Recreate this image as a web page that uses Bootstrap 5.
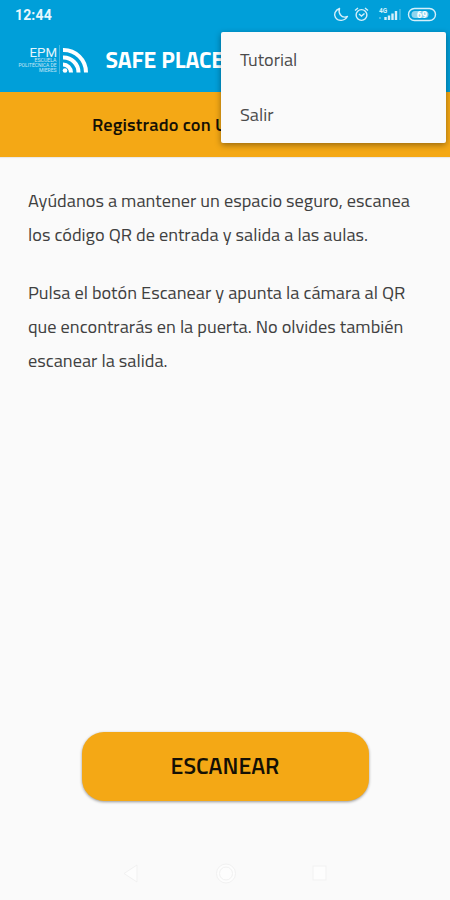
<!DOCTYPE html>
<html lang="es">
<head>
<meta charset="utf-8">
<meta name="viewport" content="width=device-width, initial-scale=1">
<title>Safe Place</title>
<link href="https://cdn.jsdelivr.net/npm/bootstrap@5.3.0/dist/css/bootstrap.min.css" rel="stylesheet">
<style>
body{background:#fafafa;font-family:"Titillium Web",Roboto,"Noto Sans",sans-serif;color:#3c3c3c;height:900px;overflow:hidden}
.top-blue{background:#009fd9;height:92px;color:#fff}
.status{height:30px;padding:0 13px 0 15px}
.clock{font-family:Roboto,sans-serif;font-size:14px;font-weight:700;line-height:30px;letter-spacing:.15px;color:#e9f7fd}
.brand{height:62px;padding:0 0 2px 17px}
.app-name{font-size:23px;font-weight:700;line-height:30px;letter-spacing:-.1px;margin-left:16.5px;white-space:nowrap}
.user-bar{background:#f4a815;height:65px;padding-left:92px;color:#141005;font-size:18.3px;font-weight:600;letter-spacing:.15px;box-shadow:0 1px 1px #0001}
.overflow-menu{top:32px;left:221px;width:225px;height:111px;border:0;border-radius:2px;background:#fafafa;box-shadow:0 2px 6px rgba(0,0,0,.38);padding:0}
.overflow-menu .dropdown-item{height:55px;padding:0 19px;font-size:18.2px;line-height:55px;color:#4b4b4b}
.intro{padding:26px 28px 0;font-size:18.3px;line-height:34px;color:#404040}
.intro p{margin:0 0 24px}
.intro span{display:block;white-space:nowrap}
.scan{width:287px;height:69px;border-radius:22px;background:#f4a815;color:#141005;font-size:23.2px;font-weight:600;line-height:1;padding:5px 0 7px;box-shadow:0 1px 3px rgba(0,0,0,.4);border:0}
.scan:hover{background:#f4a815}
.soft-keys{height:52px;margin-top:47px}
</style>
<script src="https://cdn.jsdelivr.net/npm/bootstrap@5.3.0/dist/js/bootstrap.bundle.min.js"></script>
</head>
<body class="d-flex flex-column position-relative">
<header class="top-blue flex-shrink-0">
  <div class="status d-flex justify-content-between align-items-center">
    <span class="clock">12:44</span>
    <svg width="104" height="18" viewBox="333 6 104 18" fill="none" stroke="#d5effa" stroke-width="1.4">
      <path d="M339.500 8.500C335 10 333.500 14.500 335.500 17.500C338 21.500 344.500 21.500 347.500 16.500C345 17.500 342 17 340.500 15C339 13 338.800 10.500 339.500 8.500z" stroke-linejoin="round"/>
      <circle cx="361.500" cy="15" r="5.400"/><path d="M359 14l2.500 2 3-2.500M355 10.500l3-2.500M368 10.500l-3-2.500"/>
      <text x="379" y="13" font-family="Roboto" font-size="6.500" font-weight="700" fill="#d5effa" stroke="none">4G</text>
      <path d="M380 19v-2"  opacity=".5"/><path d="M385.500 20v-3M389 20v-4.500M392.500 20v-6.500M396 20v-9" stroke-width="2.400"/><path d="M400 20v-11" opacity=".4"/>
      <rect x="408.500" y="8.500" width="27" height="12" rx="6"/><rect x="411.500" y="11" width="17" height="7" rx="3.500" fill="#8fd4ee" stroke="none"/>
      <text x="422" y="18" text-anchor="middle" font-family="Roboto" font-size="9" font-weight="700" fill="#fff" stroke="none">69</text>
    </svg>
  </div>
  <div class="brand d-flex align-items-center">
    <svg width="72" height="32" viewBox="17 44 72 32" fill="#e4f5fc" font-family="Roboto,sans-serif">
      <text x="29.500" y="56.500" font-size="13.500" textLength="27.500" lengthAdjust="spacingAndGlyphs">EPM</text>
      <g font-size="4.600" text-anchor="end" opacity=".85"><text x="56.500" y="62" textLength="22" lengthAdjust="spacingAndGlyphs">ESCUELA</text><text x="56.500" y="67" textLength="38" lengthAdjust="spacingAndGlyphs">POLITÉCNICA DE</text><text x="56.500" y="72" textLength="17.500" lengthAdjust="spacingAndGlyphs">MIERES</text></g>
      <path d="M59.500 45v29" stroke="#e4f5fc" stroke-width=".6" opacity=".5"/>
      <circle cx="65" cy="70.500" r="2.300" fill="#fff"/>
      <path d="M63 64.500a8 8 0 0 1 8 8M63 57.500a15 15 0 0 1 15.500 15M63 50a22.500 22.500 0 0 1 23 22.500" fill="none" stroke="#fff" stroke-width="4"/>
    </svg>
    <span class="app-name">SAFE PLACE</span>
  </div>
</header>
<div class="user-bar d-flex align-items-center flex-shrink-0 text-nowrap">Registrado con U</div>
<div class="overflow-menu dropdown-menu show position-absolute">
  <a class="dropdown-item" href="#">Tutorial</a>
  <a class="dropdown-item" href="#">Salir</a>
</div>
<main class="intro flex-grow-1">
  <p><span>Ayúdanos a mantener un espacio seguro, escanea</span><span>los código QR de entrada y salida a las aulas.</span></p>
  <p><span>Pulsa el botón Escanear y apunta la cámara al QR</span><span>que encontrarás en la puerta. No olvides también</span><span>escanear la salida.</span></p>
</main>
<button class="scan btn mx-auto flex-shrink-0" type="button">ESCANEAR</button>
<nav class="soft-keys d-flex justify-content-center flex-shrink-0">
  <svg width="220" height="52" viewBox="115 848 220 52" fill="#fdfdfd" stroke="#f1f1f1"><path d="M137 865v17l-13-8.500z"/><circle cx="226" cy="873.500" r="9.500"/><circle cx="226" cy="873.500" r="6.500"/><rect x="313" y="866" width="13" height="14"/></svg>
</nav>
</body>
</html>
